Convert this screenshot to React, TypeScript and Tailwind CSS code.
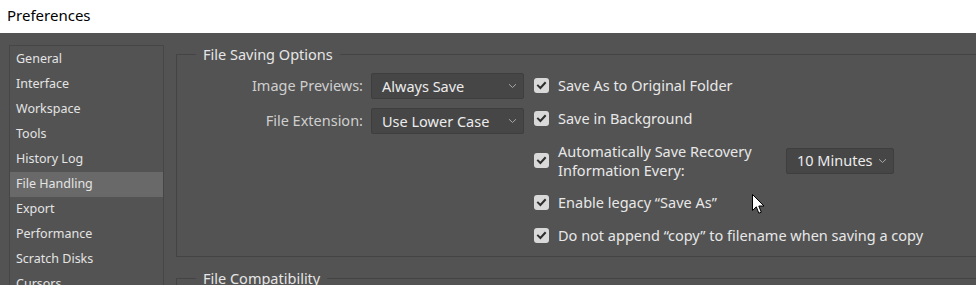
import React from "react";

const font = { fontFamily: '"Noto Sans", "Open Sans", sans-serif' };

function Chevron() {
  return (
    <svg width="9" height="6" viewBox="0 0 9 6" className="shrink-0">
      <path d="M1 1.2 L4.5 4.5 L8 1.2" fill="none" stroke="#a8a8a8" strokeWidth="1" />
    </svg>
  );
}

function Select({ value, w }: { value: string; w: string }) {
  return (
    <div
      className={`${w} h-[26px] flex items-center justify-between pl-[10px] pr-[6px] bg-[#464646] border border-[#3e3e3e] rounded-[2px] text-[14.5px] text-[#ececec]`}
    >
      <span className="leading-none">{value}</span>
      <Chevron />
    </div>
  );
}

function Check() {
  return (
    <div className="w-[15px] h-[15px] rounded-[3px] bg-[#d9d9d9] flex items-center justify-center shrink-0">
      <svg width="11" height="11" viewBox="0 0 11 11">
        <path d="M2 5.6 L4.4 8 L9 3" fill="none" stroke="#2e2e2e" strokeWidth="2" strokeLinecap="square" />
      </svg>
    </div>
  );
}

const sidebar = [
  "General",
  "Interface",
  "Workspace",
  "Tools",
  "History Log",
  "File Handling",
  "Export",
  "Performance",
  "Scratch Disks",
  "Cursors",
];

export default function App() {
  return (
    <div className="w-[976px] h-[285px] overflow-hidden bg-[#535353] relative" style={font}>
      <div className="h-[33px] bg-white flex items-center pl-[7px] text-[15px] text-black pb-[2px]">
        Preferences
      </div>
      <div className="flex pl-[9px] pt-[12px]">
        <div className="w-[155px] h-[300px] border border-[#464646] shrink-0 pt-[1px]">
          {sidebar.map((s) => (
            <div
              key={s}
              className={`h-[25px] flex items-center pl-[6px] text-[12.5px] text-[#e4e4e4] ${
                s === "File Handling" ? "bg-[#696969]" : ""
              }`}
            >
              {s}
            </div>
          ))}
        </div>
        <div className="ml-[12px] shrink-0">
          <fieldset className="w-[860px] h-[213px] border border-[#444444] mt-[-1px]">
            <legend className="ml-[19px] px-[7px] text-[14.5px] text-[#e6e6e6] leading-[20px]">
              File Saving Options
            </legend>
            <div className="flex mt-[8px]">
              <div className="flex flex-col gap-[9px] pt-[1px]">
                <div className="flex items-center">
                  <div className="w-[194px] text-right pr-[8px] text-[14.5px] text-[#cfcfcf]">Image Previews:</div>
                  <Select value="Always Save" w="w-[153px]" />
                </div>
                <div className="flex items-center">
                  <div className="w-[194px] text-right pr-[8px] text-[14.5px] text-[#cfcfcf]">File Extension:</div>
                  <Select value="Use Lower Case" w="w-[153px]" />
                </div>
              </div>
              <div className="ml-[10px] flex flex-col mt-[-3px] text-[14.5px] text-[#e8e8e8]">
                <div className="h-[33px] flex items-center gap-[9px]">
                  <Check />
                  <span>Save As to Original Folder</span>
                </div>
                <div className="h-[33px] flex items-center gap-[9px]">
                  <Check />
                  <span>Save in Background</span>
                </div>
                <div className="h-[51px] flex items-center gap-[9px]">
                  <Check />
                  <span className="w-[219px] leading-[19px]">
                    Automatically Save Recovery
                    <br />
                    Information Every:
                  </span>
                  <Select value="10 Minutes" w="w-[108px]" />
                </div>
                <div className="h-[33px] flex items-center gap-[9px]">
                  <Check />
                  <span>Enable legacy “Save As”</span>
                </div>
                <div className="h-[33px] flex items-center gap-[9px]">
                  <Check />
                  <span>Do not append “copy” to filename when saving a copy</span>
                </div>
              </div>
            </div>
          </fieldset>
          <fieldset className="w-[860px] h-[60px] border border-[#444444] mt-[11px]">
            <legend className="ml-[19px] px-[7px] text-[14.5px] text-[#e6e6e6] leading-[20px]">
              File Compatibility
            </legend>
          </fieldset>
        </div>
      </div>
      <svg
        className="absolute left-[752px] top-[194px]"
        width="13"
        height="21"
        viewBox="0 0 13 21"
      >
        <path
          d="M0.5 0.5 L0.5 16.5 L4.3 12.8 L6.8 19.2 L9.3 18.2 L6.8 12 L12 12 Z"
          fill="#ffffff"
          stroke="#000000"
          strokeWidth="1"
          strokeLinejoin="miter"
        />
      </svg>
    </div>
  );
}
